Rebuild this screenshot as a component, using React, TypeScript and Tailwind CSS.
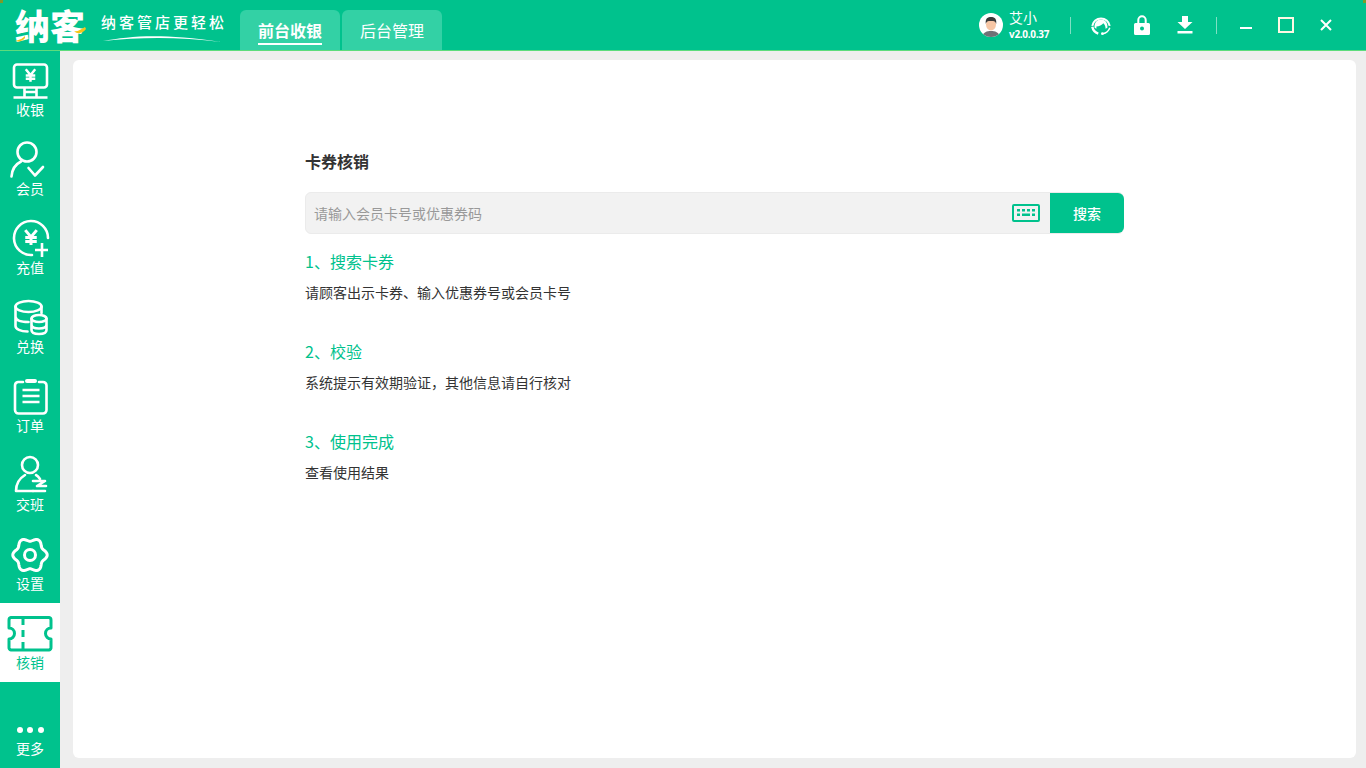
import { ReactElement, ReactNode } from "react";

const cjk = "font-['Noto_Sans_CJK_SC','Liberation_Sans',sans-serif]";

// gear outline with six soft lobes
const gearPath = Array.from({ length: 121 }, (_, i) => {
  const a = (i / 120) * Math.PI * 2;
  const r = 15.5 + 1.7 * Math.cos(6 * a);
  return `${i === 0 ? "M" : "L"}${(30 + r * Math.cos(a)).toFixed(2)} ${(21 + r * Math.sin(a)).toFixed(2)}`;
}).join(" ") + "Z";

function Icon({ children }: { children: ReactNode }): ReactElement {
  return (
    <svg
      viewBox="0 0 60 41"
      className="h-[41px] w-[60px] shrink-0"
      fill="none"
      stroke="currentColor"
      strokeWidth="2.6"
      strokeLinecap="round"
      strokeLinejoin="round"
    >
      {children}
    </svg>
  );
}

const Yen = ({ x, y, s = 1 }: { x: number; y: number; s?: number }) => (
  <path
    transform={`translate(${x} ${y}) scale(${s})`}
    d="M-5 -6 L0 0 L5 -6 M-5 0.5 H5 M-5 4 H5 M0 0 V7"
    strokeLinecap="butt"
    strokeLinejoin="miter"
  />
);

const navItems: { label: string; active?: boolean; icon: ReactNode }[] = [
  {
    label: "收银",
    icon: (
      <>
        <rect x="14" y="4.5" width="33" height="23" rx="3" />
        <Yen x={30.5} y={15} s={0.95} />
        <path d="M24.5 28 V37 M36.5 28 V37 M13.5 37.5 H47.5 M24.5 32 H36.5" strokeLinecap="butt" />
      </>
    ),
  },
  {
    label: "会员",
    icon: (
      <>
        <circle cx="27" cy="13" r="9.5" />
        <path d="M11.5 37.5 C12 30 16 25 21 22.5" />
        <path d="M28.5 29 L35 36.5 L43 28" />
      </>
    ),
  },
  {
    label: "充值",
    icon: (
      <>
        <path d="M48 20 A17 17 0 1 0 32 37" />
        <Yen x={31} y={19} s={1.15} />
        <path d="M42 25 V39 M35 32 H48" strokeLinecap="butt" />
      </>
    ),
  },
  {
    label: "兑换",
    icon: (
      <>
        <ellipse cx="28.5" cy="9.5" rx="13" ry="5.5" />
        <path d="M15.5 9.5 V29 C15.5 32 20.5 34.5 27.5 34.5 M41.5 9.5 V16 M15.5 19.5 C15.5 23 20.5 25 28.5 25" />
        <ellipse cx="39" cy="21.5" rx="7.5" ry="3.5" />
        <path d="M31.5 21.5 V33 C31.5 35.5 34.5 37 39 37 C43.5 37 46.5 35.5 46.5 33 V21.5 M31.5 27.5 C31.5 30 34.5 31.5 39 31.5 C43.5 31.5 46.5 30 46.5 27.5" />
      </>
    ),
  },
  {
    label: "订单",
    icon: (
      <>
        <path d="M23 6 H18 A3.5 3.5 0 0 0 15 9.5 V34 A3.5 3.5 0 0 0 18.5 37.5 H43 A3.5 3.5 0 0 0 46.5 34 V9.5 A3.5 3.5 0 0 0 43 6 H39" />
        <path d="M27 5 H35" strokeWidth="4" />
        <path d="M22.5 14 H39.5 M22.5 20 H39.5 M22.5 26 H39.5" strokeLinecap="butt" />
      </>
    ),
  },
  {
    label: "交班",
    icon: (
      <>
        <circle cx="30" cy="10" r="8" />
        <path d="M33 36 H16 C16 29 20 23 25 20 M36 20 C38 21 39 22.5 40 24" />
        <path d="M33 26 H45 L37 31 H46 M33 36 H45" />
      </>
    ),
  },
  {
    label: "设置",
    icon: (
      <>
        <path d={gearPath} strokeWidth="3" />
        <circle cx="30" cy="21" r="5.5" strokeWidth="3" />
      </>
    ),
  },
  {
    label: "核销",
    active: true,
    icon: (
      <>
        <path
          d="M12 4.5 H49 A2.5 2.5 0 0 1 51 7 V15 A5 5 0 0 0 51 26 V34 A2.5 2.5 0 0 1 49 37 H11 A2.5 2.5 0 0 1 9 34 V26 A5 5 0 0 0 9 15 V7 A2.5 2.5 0 0 1 11 4.5 Z"
          strokeWidth="3"
        />
        <path d="M23 5 V12 M23 17 V24 M23 29 V37" strokeWidth="3" strokeLinecap="butt" />
      </>
    ),
  },
];

function NavItem({ label, active, icon }: { label: string; active?: boolean; icon: ReactNode }): ReactElement {
  return (
    <div
      className={`flex h-[79px] w-[60px] shrink-0 flex-col items-center pt-[10px] ${
        active ? "bg-white text-[#00c28d]" : "text-white"
      }`}
    >
      <Icon>{icon}</Icon>
      <span className="-mt-px h-[18px] text-[14px] leading-[18px]">{label}</span>
    </div>
  );
}

function Step({ title, desc }: { title: string; desc: string }): ReactElement {
  return (
    <div className="h-[90px]">
      <div className="h-[24px] text-[16px] leading-[24px] text-[#00c28d]">{title}</div>
      <div className="mt-[9px] text-[14px] leading-[20px] text-[#333]">{desc}</div>
    </div>
  );
}

function Avatar(): ReactElement {
  return (
    <svg viewBox="0 0 24 24" className="h-6 w-6 shrink-0">
      <defs>
        <clipPath id="av">
          <circle cx="12" cy="12" r="12" />
        </clipPath>
      </defs>
      <g clipPath="url(#av)">
        <rect width="24" height="24" fill="#fff" />
        <path d="M3 24 C4 19 8 18 12 18 C16 18 20 19 21 24 Z" fill="#6f7176" />
        <ellipse cx="12" cy="11.5" rx="5" ry="6" fill="#f7c6a5" />
        <path d="M6.8 11 C6 5 9 4 12 4 C15 4 18 5 17.2 11 C16.5 8.5 15.5 8 12 8 C8.5 8 7.5 8.5 6.8 11 Z" fill="#3a3a3a" />
      </g>
    </svg>
  );
}

export default function App(): ReactElement {
  return (
    <div className={`relative flex h-[768px] w-[1366px] flex-col overflow-hidden bg-[#eeeeee] ${cjk}`}>
      {/* window corners */}
      <div className="absolute left-0 top-0 h-[3px] w-[3px] bg-[#7c9a2a]" />
      <div className="absolute right-0 top-0 h-[3px] w-[3px] bg-[#7c9a2a]" />
      {/* thin line under the title bar, sits over the top of the nav */}
      <div className="absolute left-0 top-[50px] z-10 h-px w-full bg-[#5ddc7c]" />

      <header className="flex h-[50px] shrink-0 items-end bg-[#00c28d]">
        <div className="relative ml-[15px] h-[50px] w-[72px] shrink-0">
          <span className="block pt-[5px] text-[35px] font-black leading-[40px] text-white">纳客</span>
          <svg viewBox="0 0 72 50" className="absolute left-0 top-0 h-[50px] w-[72px]" fill="#f5c518">
            <path d="M0 41 C5 40 8 38 10 36 L10 38 C8 41 4 42 0 41 Z" />
            <path d="M59 31 C62 32 65 30 70 27 L71 29 C68 33 63 35 59 31 Z" />
          </svg>
        </div>
        <div className="relative ml-[14px] h-[50px] w-[126px] shrink-0">
          <span className="block whitespace-nowrap pt-[11px] text-[15px] font-medium leading-[22px] tracking-[3px] text-white">
            纳客管店更轻松
          </span>
          <svg viewBox="0 0 126 50" className="absolute left-0 top-0 h-[50px] w-[126px]" fill="#fff">
            <path d="M2 41 C30 36 60 33 120 42 C80 37 40 37 2 41 Z" />
          </svg>
        </div>

        <div className="ml-[13px] flex gap-[2px]">
          <div className="flex h-10 w-[100px] items-start justify-center rounded-t-md bg-[#33d1a5] pt-[9px] text-[16px] font-bold text-white">
            <span className="border-b-2 border-white pb-[2px] leading-[22px]">前台收银</span>
          </div>
          <div className="flex h-10 w-[100px] items-start justify-center rounded-t-md bg-[#33d1a5] pt-[9px] text-[16px] leading-[22px] text-white">
            后台管理
          </div>
        </div>

        <div className="ml-[537px] flex h-[50px] items-center text-white">
          <Avatar />
          <div className="ml-[6px] flex w-[44px] flex-col">
            <span className="text-[14px] leading-[16px]">艾小</span>
            <span className="mt-[2px] font-['Open_Sans'] text-[10px] font-bold leading-[14px] tracking-[-0.3px]">
              v2.0.0.37
            </span>
          </div>
          <div className="ml-[17px] h-[17px] w-px bg-[#7fe0c4]" />
          <svg viewBox="0 0 24 24" className="ml-[19px] h-[22px] w-[22px]" fill="none" stroke="#fff" strokeWidth="2.2">
            <path d="M2.5 13 A9.6 9.6 0 0 1 21.5 13" />
            <path d="M21.6 15 A10 10 0 0 1 14 21.6" strokeWidth="1.6" />
            <path d="M2.5 14 A10 10 0 0 0 9 21.5" strokeWidth="2.6" />
            <path d="M5 15 C4.5 9 8 6 12 6 C16 6 19.5 9 19 15 L17 16 C17 13 16 11.5 14.5 10 C13 12 10 13.5 7 13.5 L7 16 Z" fill="#fff" stroke="none" />
            <circle cx="13.5" cy="21.5" r="1.5" fill="#fff" stroke="none" />
          </svg>
          <svg viewBox="0 0 16 20" className="ml-[22px] h-[20px] w-4" fill="#fff">
            <path fillRule="evenodd" d="M3.3 8 V5 A4.7 4.7 0 0 1 12.7 5 V8 H14.5 A1.5 1.5 0 0 1 16 9.5 V18.5 A1.5 1.5 0 0 1 14.5 20 H1.5 A1.5 1.5 0 0 1 0 18.5 V9.5 A1.5 1.5 0 0 1 1.5 8 Z M5.3 8 H10.7 V5 A2.7 2.7 0 0 0 5.3 5 Z M8 11.5 A2 2 0 1 0 8 15.5 A2 2 0 1 0 8 11.5 Z" />
          </svg>
          <svg viewBox="0 0 16 18" className="ml-[27px] h-[18px] w-4" fill="#fff">
            <path d="M5 0 H11 V6 H15.5 L8 13 L0.5 6 H5 Z M0.5 15 H15.5 V17.5 H0.5 Z" />
          </svg>
          <div className="ml-[23px] h-[17px] w-px bg-[#7fe0c4]" />
          <div className="ml-[23px] mt-[6px] h-[2px] w-[12px] bg-white" />
          <div className="ml-[26px] h-[16px] w-[16px] border-2 border-[#fdf8e3]" />
          <svg viewBox="0 0 12 12" className="ml-[26px] h-3 w-3" stroke="#fff" strokeWidth="2">
            <path d="M1 1 L11 11 M11 1 L1 11" />
          </svg>
        </div>
      </header>

      <div className="flex min-h-0 flex-1">
        <nav className="flex w-[60px] shrink-0 flex-col bg-[#00c28d]">
          {navItems.map((item) => (
            <NavItem key={item.label} {...item} />
          ))}
          <div className="mt-auto">
            <NavItem
              label="更多"
              icon={
                <g fill="currentColor" stroke="none">
                  <circle cx="20" cy="31" r="3" />
                  <circle cx="30" cy="31" r="3" />
                  <circle cx="41" cy="31" r="3" />
                </g>
              }
            />
          </div>
        </nav>

        <main className="mb-[10px] ml-[13px] mr-[10px] mt-[10px] flex-1 rounded-md bg-white pl-[232px] pt-[89px]">
          <div className="w-[819px]">
            <h1 className="text-[16px] font-bold leading-[24px] text-[#333]">卡券核销</h1>
            <div className="mt-[19px] flex h-[42px] rounded-md border border-[#ebebeb] bg-[#f2f2f2]">
              <input
                className="min-w-0 flex-1 bg-transparent pl-2 text-[14px] outline-none placeholder:text-[#999]"
                placeholder="请输入会员卡号或优惠券码"
                readOnly
              />
              <svg viewBox="0 0 28 18" className="mr-[10px] mt-[11px] h-[18px] w-[28px] shrink-0" fill="#00c28d">
                <path fillRule="evenodd" d="M2 0 H26 A2 2 0 0 1 28 2 V16 A2 2 0 0 1 26 18 H2 A2 2 0 0 1 0 16 V2 A2 2 0 0 1 2 0 Z M2 2 V16 H26 V2 Z" />
                <path d="M5 5 H8 V7.5 H5 Z M10 5 H13 V7.5 H10 Z M15 5 H18 V7.5 H15 Z M20 5 H23 V7.5 H20 Z M5 9.5 H8 V12 H5 Z M10 9.5 H18 V12 H10 Z M20 9.5 H23 V12 H20 Z" />
              </svg>
              <button className="-mr-px w-[74px] shrink-0 rounded-r-md bg-[#00c28d] text-[14px] font-medium text-white">
                搜索
              </button>
            </div>
            <div className="mt-[15px]">
              <Step title="1、搜索卡券" desc="请顾客出示卡券、输入优惠券号或会员卡号" />
              <Step title="2、校验" desc="系统提示有效期验证，其他信息请自行核对" />
              <Step title="3、使用完成" desc="查看使用结果" />
            </div>
          </div>
        </main>
      </div>
    </div>
  );
}
